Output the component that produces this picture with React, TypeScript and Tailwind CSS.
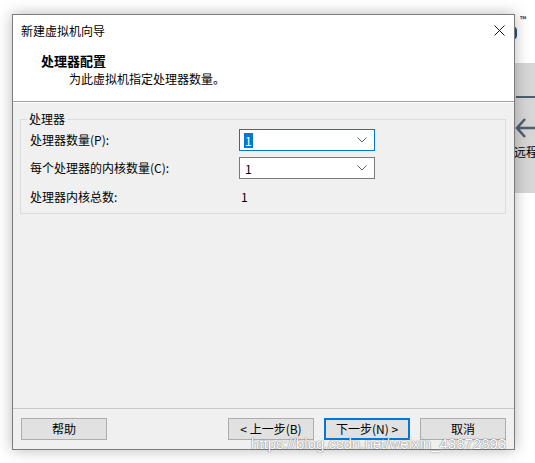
import React from "react";

const font = { fontFamily: '"Noto Sans CJK SC", "Liberation Sans", sans-serif' };

function Chevron() {
  return (
    <svg width="10" height="6" viewBox="0 0 10 6" className="text-[#606060]">
      <path d="M0.5 0.5 L5 5 L9.5 0.5" fill="none" stroke="currentColor" strokeWidth="1" />
    </svg>
  );
}

function Combo({ focused }: { focused?: boolean }) {
  return (
    <div
      className={
        "flex h-[22px] w-[136px] items-center justify-between bg-white pl-[4px] pr-[7px] " +
        (focused ? "border border-[#0078d7]" : "border border-[#7a7a7a]")
      }
    >
      {focused ? (
        <span className="bg-[#0078d7] px-[1px] text-[12px] leading-[15px] text-white">1</span>
      ) : (
        <span className="px-[1px] text-[12px] leading-[15px] text-black">1</span>
      )}
      <Chevron />
    </div>
  );
}

function Btn({ children, primary }: { children: React.ReactNode; primary?: boolean }) {
  return (
    <div
      className={
        "flex h-[22px] w-[86px] items-center justify-center bg-[#e1e1e1] text-[12px] text-black " +
        (primary ? "border-2 border-[#0078d7]" : "border border-[#adadad]")
      }
    >
      {children}
    </div>
  );
}

export default function App() {
  return (
    <div className="relative h-[463px] w-[535px] overflow-hidden bg-white" style={font}>
      {/* background app on the right */}
      <div className="absolute left-[520px] top-[16px] text-[8px] font-bold leading-none text-[#1a3a6b]">™</div>
      <div className="absolute left-[508px] top-[26px] h-[14px] w-[9px] rounded-full border-[3px] border-[#2b4f8a]" />
      <div className="absolute left-[500px] top-[63px] flex h-[130px] w-[35px] flex-col bg-[#d6d6d6]">
        <div className="ml-[16px] mt-[33px] h-[2px] w-[19px] bg-[#4f5d6d]" />
        <svg width="20" height="22" viewBox="0 0 20 22" className="ml-[15px] mt-[19px]">
          <path d="M10 2 L2 11 L10 20 M2 11 H20" fill="none" stroke="#4f5d6d" strokeWidth="2.5" />
        </svg>
        <div className="ml-[14px] mt-[5px] whitespace-nowrap text-[12px] leading-[16px] text-black">远程</div>
      </div>

      {/* dialog */}
      <div className="absolute left-[12px] top-[14px] flex h-[436px] w-[503px] flex-col border border-[#7b7b7b] bg-[#f0f0f0] shadow-[0_0_14px_rgba(0,0,0,0.28)]">
        {/* title + header (white) */}
        <div className="flex flex-col bg-white">
          <div className="flex h-[31px] items-center justify-between pl-[8px] pr-[9px]">
            <span className="text-[12px] text-black">新建虚拟机向导</span>
            <svg width="11" height="11" viewBox="0 0 11 11">
              <path d="M0.5 0.5 L10.5 10.5 M10.5 0.5 L0.5 10.5" stroke="#1a1a1a" strokeWidth="1" />
            </svg>
          </div>
          <div className="flex h-[55px] flex-col pl-[28px] pt-[6px]">
            <div className="text-[13px] font-bold leading-[18px] text-black">处理器配置</div>
            <div className="pl-[28px] text-[12px] leading-[18px] text-black">为此虚拟机指定处理器数量。</div>
          </div>
        </div>
        <div className="h-px bg-[#a0a0a0]" />
        <div className="h-px bg-white" />

        {/* body */}
        <div className="flex flex-1 flex-col px-[7px] pt-[16px] pr-[8px]">
          <div className="relative border border-[#dcdcdc] px-[9px] pb-[8px] pt-[9px]">
            <div className="absolute left-[6px] top-[-9px] bg-[#f0f0f0] px-[2px] text-[12px] leading-[16px] text-black">
              处理器
            </div>
            <div className="flex flex-col gap-[6px]">
              <div className="flex items-center">
                <div className="w-[209px] text-[12px] text-black">处理器数量(P):</div>
                <Combo focused />
              </div>
              <div className="flex items-center">
                <div className="w-[209px] text-[12px] text-black">每个处理器的内核数量(C):</div>
                <Combo />
              </div>
              <div className="mt-[4px] flex h-[16px] items-center">
                <div className="w-[211px] text-[12px] text-black">处理器内核总数:</div>
                <div className="text-[12px] text-black">1</div>
              </div>
            </div>
          </div>
        </div>

        {/* footer */}
        <div className="h-px bg-[#c8c8c8]" />
        <div className="flex h-[40px] items-start justify-between px-[8px] pt-[9px]">
          <Btn>帮助</Btn>
          <div className="flex gap-[10px]">
            <Btn>&lt; 上一步(B)</Btn>
            <Btn primary>下一步(N) &gt;</Btn>
            <Btn>取消</Btn>
          </div>
        </div>
      </div>

      {/* watermark */}
      <div
        className="absolute left-[251px] top-[435px] whitespace-nowrap text-[15px] leading-[18px] text-white [text-shadow:0_0_1px_rgba(0,0,0,0.6),0_0_2px_rgba(0,0,0,0.25)]"
        style={{ fontFamily: '"Liberation Sans", Arial, sans-serif' }}
      >
        https://blog.csdn.net/weixin_43872893
      </div>
    </div>
  );
}
